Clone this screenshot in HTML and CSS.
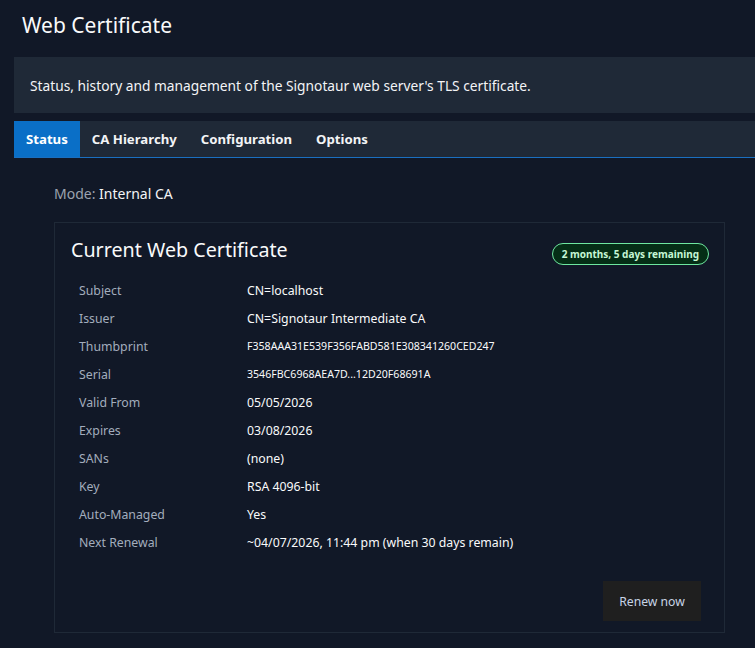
FILE: index.html
```html
<!DOCTYPE html>
<html lang="en">
<head>
<meta charset="utf-8">
<title>Web Certificate</title>
<link rel="stylesheet" href="styles.css">
</head>
<body>
<header class="page-header">
  <h1 class="page-title">Web Certificate</h1>
</header>
<div class="desc">Status, history and management of the Signotaur web server's TLS certificate.</div>
<nav class="tabs">
  <a class="tab tab-active">Status</a>
  <a class="tab">CA Hierarchy</a>
  <a class="tab">Configuration</a>
  <a class="tab">Options</a>
</nav>
<main class="content">
  <div class="mode"><span class="mode-label">Mode:</span> Internal CA</div>
  <section class="card">
    <div class="card-head">
      <h2 class="card-title">Current Web Certificate</h2>
      <span class="badge">2 months, 5 days remaining</span>
    </div>
    <dl class="details">
      <dt>Subject</dt><dd>CN=localhost</dd>
      <dt>Issuer</dt><dd>CN=Signotaur Intermediate CA</dd>
      <dt>Thumbprint</dt><dd class="mono">F358AAA31E539F356FABD581E308341260CED247</dd>
      <dt>Serial</dt><dd class="mono">3546FBC6968AEA7D...12D20F68691A</dd>
      <dt>Valid From</dt><dd>05/05/2026</dd>
      <dt>Expires</dt><dd>03/08/2026</dd>
      <dt>SANs</dt><dd>(none)</dd>
      <dt>Key</dt><dd>RSA 4096-bit</dd>
      <dt>Auto-Managed</dt><dd>Yes</dd>
      <dt>Next Renewal</dt><dd>~04/07/2026, 11:44 pm (when 30 days remain)</dd>
    </dl>
    <div class="card-actions">
      <button class="btn">Renew now</button>
    </div>
  </section>
</main>
</body>
</html>
```
FILE: styles.css
```css
html, body {
  margin: 0;
  padding: 0;
}
body {
  background: #111827;
  color: #f3f4f6;
  font-family: "Noto Sans", "Open Sans", sans-serif;
  font-size: 14px;
  width: 755px;
  height: 648px;
  overflow: hidden;
}
.page-header {
  padding: 10px 22px 0;
  height: 57px;
  box-sizing: border-box;
}
.page-title {
  margin: 0;
  font-size: 21px;
  font-weight: 400;
  line-height: 30px;
  color: #f9fafb;
}
.desc {
  margin-left: 14px;
  background: #1f2937;
  height: 56px;
  display: flex;
  align-items: center;
  padding: 0 16px;
  font-size: 13.75px;
  color: #f3f4f6;
}
.tabs {
  margin: 8px 0 0 14px;
  background: #1f2937;
  display: flex;
  height: 36px;
  border-bottom: 1px solid #1a6fc0;
}
.tab {
  display: flex;
  align-items: center;
  padding: 0 12px;
  font-size: 13.2px;
  font-weight: 700;
  color: #f3f4f6;
}
.tab-active {
  background: #0a6fc7;
  color: #ffffff;
}
.content {
  padding: 0 30px 0 54px;
}
.mode {
  margin-top: 25px;
  height: 22px;
  line-height: 22px;
  color: #f3f4f6;
}
.mode-label {
  color: #9ca3af;
}
.card {
  margin-top: 17px;
  border: 1px solid #1f2937;
  padding: 13px 15px 11px 16px;
}
.card-head {
  display: flex;
  align-items: flex-start;
  justify-content: space-between;
  height: 28px;
}
.card-title {
  margin: 0;
  font-size: 19.7px;
  font-weight: 400;
  line-height: 28px;
  color: #f9fafb;
}
.badge {
  border: 1px solid #6ee7a0;
  background: #052e16;
  color: #c6f6d5;
  border-radius: 11px;
  font-size: 10px;
  font-weight: 700;
  padding: 0 9px;
  height: 20px;
  line-height: 20px;
  margin-top: 7px;
}
.details {
  margin: 12px 0 0 8px;
  display: grid;
  grid-template-columns: 168px 1fr;
  grid-auto-rows: 28px;
  align-items: center;
  font-size: 12.3px;
}
.details dt {
  color: #a3adbd;
}
.details dd {
  margin: 0;
  color: #f9fafb;
}
.details dd.mono {
  font-size: 10.6px;
}
.card-actions {
  display: flex;
  justify-content: flex-end;
  margin-top: 25px;
  padding-right: 8px;
}
.btn {
  background: #1f1f1f;
  color: #c8d4e6;
  border: none;
  font-family: inherit;
  font-size: 12.2px;
  width: 98px;
  height: 40px;
}
```
